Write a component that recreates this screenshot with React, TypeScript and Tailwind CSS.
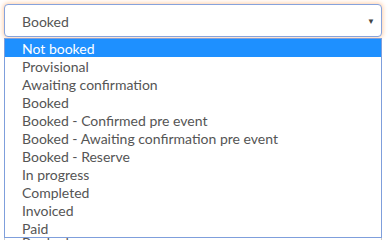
import React from 'react';

const options = [
  'Not booked',
  'Provisional',
  'Awaiting confirmation',
  'Booked',
  'Booked - Confirmed pre event',
  'Booked - Awaiting confirmation pre event',
  'Booked - Reserve',
  'In progress',
  'Completed',
  'Invoiced',
  'Paid',
];

function Select({ value, focused }: { value: string; focused?: boolean }) {
  return (
    <div
      className={`flex h-[33px] items-center justify-between rounded-[4px] border bg-white pl-[17px] pr-[6px] text-[14px] text-[#555] ${
        focused
          ? 'border-[#86a3dd] shadow-[0_0_4px_1px_rgba(255,170,100,0.55)]'
          : 'border-[#ccc]'
      }`}
    >
      <span className="pt-px">{value}</span>
      <span className="text-[8px] text-[#444]">▼</span>
    </div>
  );
}

export default function App() {
  const selected = 0;

  return (
    <div className="relative h-[240px] w-[390px] overflow-hidden bg-white font-['Lato','Liberation_Sans',sans-serif]">
      <div className="flex flex-col gap-[188px] pl-[4px] pr-[8px] pt-[4px]">
        <Select value="Booked" focused />
        <Select value="Booked" />
      </div>

      {/* Open dropdown list */}
      <ul className="absolute left-[4px] top-[38px] w-[378px] border border-[#7f9fdc] bg-white">
        {options.map((opt, i) => (
          <li
            key={opt}
            className={`h-[18px] pl-[17px] pt-px text-[14px] leading-[17px] ${
              i === selected ? 'bg-[#1e90ff] text-white' : 'text-[#555]'
            }`}
          >
            {opt}
          </li>
        ))}
      </ul>
    </div>
  );
}
